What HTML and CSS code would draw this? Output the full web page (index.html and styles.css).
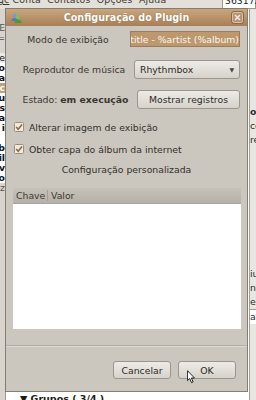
FILE: index.html
```html
<!DOCTYPE html>
<html lang="pt">
<head>
    <meta charset="UTF-8">
    <title>Configuração do Plugin</title>
    <link rel="stylesheet" href="styles.css">
</head>
<body>
    <!-- janela de fundo (lista de contatos) -->
    <div class="backwin">
        <div class="menubar">
            <span class="menu-items"><u>gc</u> Conta &nbsp;Contatos &nbsp;Opções &nbsp;Ajuda</span>
            <span class="status-box">363172</span>
        </div>
        <div class="workspace">
            <div class="sidebar">
                <div class="srow gray">E</div>
                <div class="srow gray">=</div>
                <div class="srow gray"></div>
                <div class="srow light">e</div>
                <div class="srow">o</div>
                <div class="srow">a</div>
                <div class="srow sel">ic</div>
                <div class="srow">u</div>
                <div class="srow">s</div>
                <div class="srow">a</div>
                <div class="srow">i</div>
                <div class="srow"></div>
                <div class="srow">b</div>
                <div class="srow">il</div>
                <div class="srow">v</div>
                <div class="srow">o</div>
                <div class="srow gray">iz</div>
            </div>
            <div class="mainpane">
                <div class="contacts"></div>
                <div class="groups">▼ Grupos ( 3/4 )</div>
            </div>
            <div class="rightpane">
                <div class="rrow bold">o</div>
                <div class="rrow">co</div>
                <div class="rrow">re</div>
                <div class="rrow spacer"></div>
                <div class="rrow">iu</div>
                <div class="rrow">n</div>
                <div class="rrow">es</div>
                <div class="rrow boxed">afi</div>
            </div>
        </div>
    </div>

    <!-- dialogo -->
    <div class="dialog">
        <div class="titlebar">
            <svg class="title-icon" width="11" height="10" viewBox="0 0 11 10">
                <circle cx="3.5" cy="2.5" r="2" fill="#6f9fd8"/>
                <path d="M0.5 8 Q0.5 5 3.5 5 Q6.5 5 6.5 8 Z" fill="#4a7fc4"/>
                <circle cx="7" cy="4" r="2.1" fill="#7cc34f"/>
                <path d="M3.5 10 Q3.5 6.4 7 6.4 Q10.5 6.4 10.5 10 Z" fill="#4e9a2a"/>
            </svg>
            <span class="title-text">Configuração do Plugin</span>
            <svg class="close-btn" width="13" height="13" viewBox="0 0 13 13">
                <rect x="0.5" y="0.5" width="12" height="12" rx="2.5" fill="#b89270" stroke="#8a6a4c"/>
                <rect x="1.5" y="1.5" width="10" height="10" rx="2" fill="none" stroke="#dcc4aa"/>
                <path d="M4 4 L9 9 M9 4 L4 9" stroke="#f4ece4" stroke-width="1.6"/>
            </svg>
        </div>

        <div class="content">
            <div class="form-row">
                <span class="form-label">Modo de exibição</span>
                <div class="entry"><span class="entry-text">%title - %artist (%album)</span></div>
            </div>
            <div class="form-row">
                <span class="form-label">Reprodutor de música</span>
                <div class="btn combo"><span>Rhythmbox</span><span class="arrow">▼</span></div>
            </div>
            <div class="form-row">
                <span class="form-label">Estado: <b>em execução</b></span>
                <div class="btn logs">Mostrar registros</div>
            </div>

            <div class="check-row first">
                <svg class="check" width="10" height="10" viewBox="0 0 10 10">
                    <rect x="0.5" y="0.5" width="9" height="9" rx="1" fill="#ede9e3" stroke="#9c8f80"/>
                    <path d="M2.2 5 L4.2 7.2 L8 2.6" fill="none" stroke="#8d6a46" stroke-width="1.6"/>
                </svg>
                <span>Alterar imagem de exibição</span>
            </div>
            <div class="check-row">
                <svg class="check" width="10" height="10" viewBox="0 0 10 10">
                    <rect x="0.5" y="0.5" width="9" height="9" rx="1" fill="#ede9e3" stroke="#9c8f80"/>
                    <path d="M2.2 5 L4.2 7.2 L8 2.6" fill="none" stroke="#8d6a46" stroke-width="1.6"/>
                </svg>
                <span>Obter capa do álbum da internet</span>
            </div>

            <div class="section-title">Configuração personalizada</div>

            <div class="tree">
                <div class="tree-head">
                    <span class="col key">Chave</span>
                    <span class="col">Valor</span>
                </div>
                <div class="tree-body"></div>
            </div>

            <div class="separator"></div>

            <div class="actions">
                <div class="btn action">Cancelar</div>
                <div class="btn action">OK</div>
            </div>
        </div>

        <svg class="cursor" width="9" height="14" viewBox="0 0 10 15">
            <path d="M0.5 0.5 L0.5 11.5 L3 9.2 L5 13.8 L6.8 13 L4.9 8.6 L8.3 8.6 Z" fill="#fff" stroke="#111" stroke-width="1"/>
        </svg>
    </div>
</body>
</html>
```

FILE: styles.css
```css
/* Base */
body {
    margin: 0;
    width: 256px;
    height: 400px;
    overflow: hidden;
    position: relative;
    font-family: "DejaVu Sans", sans-serif;
    font-size: 9.3px;
    color: #2e2b27;
    background: #ece9e4;
}

/* Janela de fundo */
.backwin {
    display: flex;
    flex-direction: column;
    height: 400px;
}

.menubar {
    height: 9px;
    background: #e3e0da;
    display: flex;
    justify-content: space-between;
    overflow: hidden;
    white-space: nowrap;
    color: #3a3630;
}

.menu-items {
    margin-top: -6px;
    margin-left: -2px;
    letter-spacing: 0.2px;
}

.status-box {
    background: #fff;
    border: 1px solid #9a958d;
    margin-top: -6px;
    padding: 0 2px;
    width: 28px;
    height: 13px;
    color: #222;
}

.workspace {
    flex: 1;
    display: flex;
}

.sidebar {
    width: 5px;
    overflow: hidden;
    background: #d8d4cd;
    border-right: 1px solid #9c978f;
    padding-top: 14px;
}

.srow {
    height: 10px;
    line-height: 10px;
    background: #fff;
    font-weight: bold;
    color: #111;
    text-align: right;
    white-space: nowrap;
    direction: rtl;
}

.srow.gray {
    background: #d8d4cd;
    color: #555;
    font-weight: normal;
}

.srow.light {
    background: #eceae6;
    font-weight: normal;
}

.srow.sel {
    background: #c59f79;
    color: #fff;
}

.mainpane {
    flex: 1;
    display: flex;
    flex-direction: column;
    background: #fff;
}

.contacts {
    flex: 1;
}

.groups {
    height: 9px;
    padding-left: 14px;
    font-weight: bold;
    color: #1d1b18;
    line-height: 16px;
    overflow: hidden;
    font-size: 9.5px;
}

.rightpane {
    width: 6px;
    overflow: hidden;
    background: #e9e6e1;
    border-left: 1px solid #a29d95;
    padding-top: 96px;
}

.rrow {
    height: 14px;
    line-height: 14px;
    color: #2a2a2a;
    white-space: nowrap;
}

.rrow.bold {
    font-weight: bold;
}

.rrow.spacer {
    height: 120px;
}

.rrow.boxed {
    background: #fff;
    border-top: 1px solid #a29d95;
}

/* Dialogo */
.dialog {
    position: absolute;
    left: 5px;
    top: 8px;
    width: 243px;
    height: 384px;
    box-sizing: border-box;
    border: 1px solid #857d72;
    background: #cbc7bf;
    display: flex;
    flex-direction: column;
}

.titlebar {
    height: 17px;
    background: linear-gradient(#c9a67f, #a87f56);
    display: grid;
    grid-template-columns: 20px 1fr 20px;
    align-items: center;
    color: #fff;
}

.title-icon {
    margin-left: 5px;
}

.title-text {
    text-align: center;
    font-weight: bold;
    font-size: 9.6px;
    text-shadow: 0 0 1px rgba(90, 60, 30, 0.6);
}

.close-btn {
    margin-left: 4px;
}

.content {
    flex: 1;
    display: flex;
    flex-direction: column;
    padding-top: 3px;
}

.form-row {
    display: grid;
    grid-template-columns: 1fr auto;
    align-items: center;
    height: 20px;
    margin-bottom: 10px;
    padding-right: 7px;
}

.form-label {
    text-align: center;
    padding-left: 8px;
    color: #3a3631;
}

.form-row:first-child .form-label {
    padding-left: 0;
}

.entry {
    width: 110px;
    height: 16px;
    box-sizing: border-box;
    border: 1px solid #9c7c5a;
    background: #bd976e;
    display: flex;
    justify-content: flex-end;
    align-items: center;
    overflow: hidden;
    white-space: nowrap;
    color: #fbf6f0;
}

.btn {
    height: 19px;
    box-sizing: border-box;
    border: 1px solid #9b968e;
    border-radius: 3px;
    background: linear-gradient(#eeebe6, #d6d2cb);
    display: flex;
    align-items: center;
    justify-content: center;
    color: #2e2b27;
}

.combo {
    width: 106px;
    justify-content: space-between;
    padding: 0 5px 0 5px;
}

.arrow {
    font-size: 6px;
    color: #4a4640;
}

.logs {
    width: 103px;
}

.check-row {
    display: flex;
    align-items: center;
    gap: 5px;
    height: 16px;
    padding-left: 8px;
    margin-bottom: 6px;
    color: #34302b;
}

.section-title {
    height: 16px;
    line-height: 16px;
    text-align: center;
    margin: -1px 0 10px;
    color: #34302b;
}

.tree {
    height: 141px;
    margin: 0 6px 0 7px;
    display: flex;
    flex-direction: column;
}

.tree-head {
    height: 15px;
    background: linear-gradient(#c6c2ba, #b5b1a9);
    border-bottom: 1px solid #a9a49c;
    display: flex;
    align-items: center;
    color: #3d3933;
}

.col {
    padding-left: 3px;
}

.col.key {
    width: 31px;
    border-right: 1px solid #a39e96;
}

.tree-body {
    flex: 1;
    background: #fff;
}

.separator {
    height: 0;
    border-top: 1px solid #b3aea6;
    border-bottom: 1px solid #dcd9d3;
    margin: 16px 0 14px;
}

.actions {
    display: flex;
    justify-content: flex-end;
    gap: 7px;
    padding-right: 11px;
}

.action {
    width: 58px;
    height: 18px;
}

.cursor {
    position: absolute;
    left: 181px;
    top: 361px;
}
```
